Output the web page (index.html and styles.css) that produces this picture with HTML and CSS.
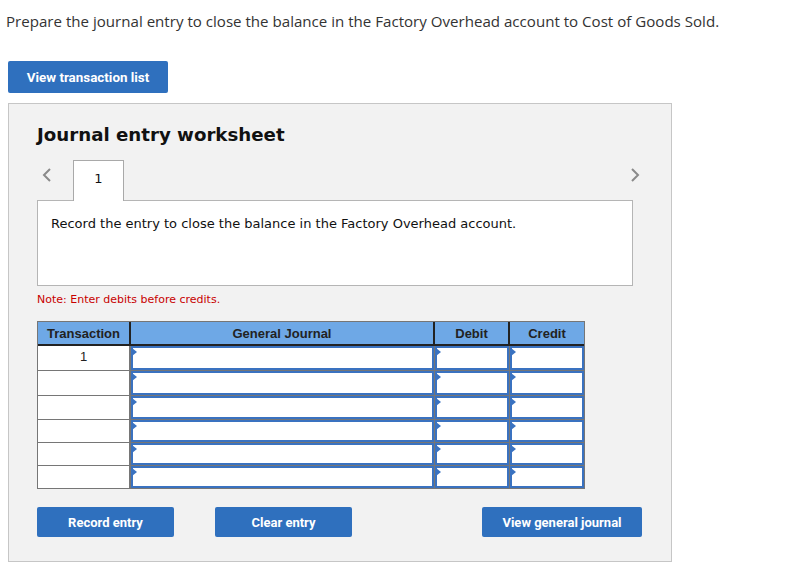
FILE: index.html
```html
<!DOCTYPE html>
<html>
<head>
<meta charset="utf-8">
<link rel="stylesheet" href="styles.css">
</head>
<body>
<p class="prompt">Prepare the journal entry to close the balance in the Factory Overhead account to Cost of Goods Sold.</p>
<button class="btn btn-list">View transaction list</button>
<section class="panel">
  <h2 class="title">Journal entry worksheet</h2>
  <div class="tabs">
    <span class="chev chev-left"><svg width="10" height="14" viewBox="0 0 10 14"><path d="M8 1 L2 7 L8 13" fill="none" stroke="#8a8a8a" stroke-width="2"/></svg></span>
    <span class="tab">1</span>
    <span class="chev chev-right"><svg width="10" height="14" viewBox="0 0 10 14"><path d="M2 1 L8 7 L2 13" fill="none" stroke="#8a8a8a" stroke-width="2"/></svg></span>
  </div>
  <div class="instr">Record the entry to close the balance in the Factory Overhead account.</div>
  <p class="note">Note: Enter debits before credits.</p>
  <div class="journal">
    <div class="hd">Transaction</div>
    <div class="hd">General Journal</div>
    <div class="hd">Debit</div>
    <div class="hd hd-last">Credit</div>

    <div class="tc r25">1</div><div class="cell r25"><span class="inp"></span></div><div class="cell r25"><span class="inp"></span></div><div class="cell r25 last"><span class="inp"></span></div>
    <div class="tc r25"></div><div class="cell r25"><span class="inp"></span></div><div class="cell r25"><span class="inp"></span></div><div class="cell r25 last"><span class="inp"></span></div>
    <div class="tc r24"></div><div class="cell r24"><span class="inp"></span></div><div class="cell r24"><span class="inp"></span></div><div class="cell r24 last"><span class="inp"></span></div>
    <div class="tc r23"></div><div class="cell r23"><span class="inp"></span></div><div class="cell r23"><span class="inp"></span></div><div class="cell r23 last"><span class="inp"></span></div>
    <div class="tc r23"></div><div class="cell r23"><span class="inp"></span></div><div class="cell r23"><span class="inp"></span></div><div class="cell r23 last"><span class="inp"></span></div>
    <div class="tc r22 bottom"></div><div class="cell r22 bottom"><span class="inp"></span></div><div class="cell r22 bottom"><span class="inp"></span></div><div class="cell r22 bottom last"><span class="inp"></span></div>
  </div>
  <div class="actions">
    <button class="btn btn-act">Record entry</button>
    <button class="btn btn-act">Clear entry</button>
    <button class="btn btn-act btn-view">View general journal</button>
  </div>
</section>
</body>
</html>
```

FILE: styles.css
```css
html, body { margin: 0; padding: 0; background: #fff; }
body { width: 812px; height: 572px; overflow: hidden; }

.prompt {
  font-family: "Open Sans", "Liberation Sans", sans-serif;
  font-size: 15.1px;
  color: #333;
  margin: 0;
  padding: 11px 0 0 6px;
  line-height: 20px;
  white-space: nowrap;
}

.btn {
  font-family: "Roboto", "Liberation Sans", sans-serif;
  font-weight: 700;
  font-size: 13px;
  color: #fff;
  background: #2f70be;
  border: none;
  border-radius: 2px;
  padding: 0;
  cursor: pointer;
}
.btn-list {
  display: block;
  margin: 30px 0 0 8px;
  width: 160px;
  height: 32px;
  font-size: 13.4px;
}

.panel {
  margin: 10px 0 0 8px;
  width: 664px;
  height: 459px;
  box-sizing: border-box;
  border: 1px solid #c6c6c6;
  background: #f2f2f2;
  padding: 0 38px 0 28px;
}
.title {
  font-family: "DejaVu Sans", Verdana, sans-serif;
  font-weight: 700;
  font-size: 18.2px;
  color: #111;
  margin: 20px 0 0 0;
  line-height: 22px;
}
.tabs {
  display: flex;
  align-items: flex-start;
  margin-top: 14px;
  height: 41px;
}
.chev { display: block; margin-top: 8px; }
.chev-left { margin-left: 5px; }
.tab {
  box-sizing: border-box;
  width: 51px;
  height: 41px;
  margin-left: 21px;
  border: 1px solid #a9a9a9;
  border-bottom: none;
  background: #fff;
  font-family: "DejaVu Sans", Verdana, sans-serif;
  font-size: 13px;
  color: #111;
  text-align: center;
  padding-top: 10px;
  position: relative;
  z-index: 2;
}
.chev-right { margin-left: auto; margin-right: -7px; }
.instr {
  box-sizing: border-box;
  height: 86px;
  margin-top: -1px;
  border: 1px solid #b5b5b5;
  background: #fff;
  font-family: "DejaVu Sans", Verdana, sans-serif;
  font-size: 13px;
  color: #111;
  padding: 15px 0 0 13px;
}
.note {
  font-family: "DejaVu Sans", Verdana, sans-serif;
  font-size: 11px;
  color: #c80000;
  margin: 7px 0 0 0;
  line-height: 14px;
}
.journal {
  display: grid;
  grid-template-columns: 93px 304px 75px 74px;
  width: 548px;
  margin-top: 14px;
  box-sizing: border-box;
  border: 1px solid #767676;
  background: #fff;
}
.hd {
  height: 22px;
  background: #6ea8e6;
  border-right: 2px solid #222;
  border-bottom: 2px solid #222;
  font-family: "Liberation Sans", Arial, sans-serif;
  font-weight: 700;
  font-size: 13px;
  color: #222;
  display: flex;
  align-items: center;
  justify-content: center;
}
.hd-last { border-right: none; }
.tc {
  box-sizing: border-box;
  border-right: 2px solid #767676;
  border-bottom: 1px solid #767676;
  font-family: "Liberation Sans", Arial, sans-serif;
  font-size: 13px;
  color: #222;
  text-align: center;
  line-height: 22px;
}
.cell {
  box-sizing: border-box;
  border-right: 1px solid #767676;
  border-bottom: 1px solid #767676;
  background: #fff;
}
.cell.last { border-right: none; }
.bottom { border-bottom: none; }
.r25 { height: 25px; }
.r24 { height: 24px; }
.r23 { height: 23px; }
.r22 { height: 22px; }
.inp {
  display: block;
  height: 100%;
  box-sizing: border-box;
  border: 2px solid #3a72c0;
  position: relative;
}
.inp::before {
  content: "";
  position: absolute;
  left: -1px;
  top: 0;
  border-left: 5px solid #3a72c0;
  border-top: 4px solid transparent;
  border-bottom: 4px solid transparent;
}
.actions {
  display: flex;
  margin-top: 18px;
}
.btn-act {
  flex-shrink: 0;
  width: 137px;
  height: 30px;
}
.btn-act + .btn-act { margin-left: 41px; }
.btn-act.btn-view { width: 160px; margin-left: 130px; }
```
